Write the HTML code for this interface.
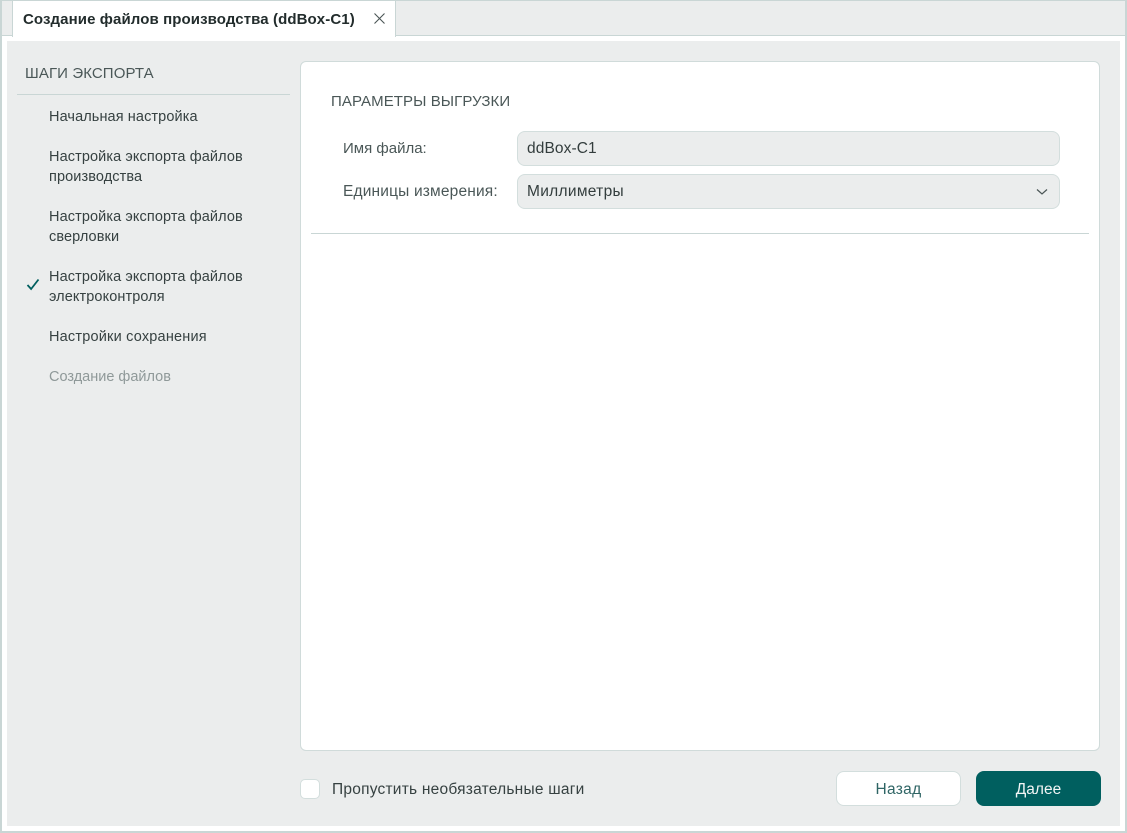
<!DOCTYPE html>
<html lang="ru"><head><meta charset="utf-8"><style>
html,body{margin:0;padding:0}
body{width:1127px;height:833px;position:relative;overflow:hidden;background:#fff;font-family:"Liberation Sans",sans-serif;color:#3a4646}
div,span{position:absolute;box-sizing:border-box}
.t{white-space:nowrap;font-size:14.5px;line-height:20px;color:#364141;letter-spacing:.1px}
.b{font-size:15px}
.c{font-size:15.5px}
</style></head><body>
<div style="left:0;top:0;width:1127px;height:833px;border:2px solid #c9d6d5;border-top-width:1px"></div>
<div style="left:2px;top:1px;width:1123px;height:35px;background:#ebeded;border-bottom:1px solid #c9d6d5"></div>
<div style="left:12px;top:1px;width:384px;height:36px;background:#fff;border-left:1px solid #c9d6d5;border-right:1px solid #c9d6d5"></div>
<span class="t" style="left:23px;top:10px;font-size:15px;font-weight:bold;color:#222c2c;letter-spacing:.1px">Создание файлов производства (ddBox-C1)</span>
<svg style="position:absolute;left:373px;top:12px" width="13" height="13" viewBox="0 0 13 13"><path d="M1.5 1.5l10 10M11.5 1.5l-10 10" stroke="#4a5555" stroke-width="1.1" fill="none"/></svg>
<div style="left:7px;top:41px;width:1113px;height:785px;background:#ebeded"></div>

<span class="t b" style="left:25px;top:64px;color:#4a5757;letter-spacing:.1px">ШАГИ ЭКСПОРТА</span>
<div style="left:17px;top:94px;width:273px;height:1px;background:#c9d6d5"></div>
<span class="t" style="left:49px;top:107px">Начальная настройка</span>
<span class="t" style="left:49px;top:147px">Настройка экспорта файлов</span>
<span class="t" style="left:49px;top:167px">производства</span>
<span class="t" style="left:49px;top:207px">Настройка экспорта файлов</span>
<span class="t" style="left:49px;top:227px">сверловки</span>
<svg style="position:absolute;left:26px;top:278px" width="14" height="13" viewBox="0 0 14 13"><path d="M1.5 7l3.6 4L12.5 1.5" stroke="#005f5f" stroke-width="1.8" fill="none"/></svg>
<span class="t" style="left:49px;top:267px">Настройка экспорта файлов</span>
<span class="t" style="left:49px;top:287px">электроконтроля</span>
<span class="t" style="left:49px;top:327px;letter-spacing:.2px">Настройки сохранения</span>
<span class="t" style="left:49px;top:367px;letter-spacing:0;color:#8f9999">Создание файлов</span>

<div style="left:300px;top:61px;width:800px;height:690px;background:#fff;border:1px solid #d0dbda;border-radius:6px"></div>
<span class="t b" style="left:331px;top:92px;color:#4a5757;letter-spacing:.08px">ПАРАМЕТРЫ ВЫГРУЗКИ</span>
<span class="t b" style="left:343px;top:139px;letter-spacing:0;color:#4a5757">Имя файла:</span>
<div style="left:517px;top:131px;width:543px;height:35px;background:#ebeded;border:1px solid #d3dedd;border-radius:8px"></div>
<span class="t c" style="left:527px;top:139px;letter-spacing:.1px;color:#333d3d">ddBox-C1</span>
<span class="t c" style="left:343px;top:182px;letter-spacing:.17px;color:#4a5757">Единицы измерения:</span>
<div style="left:517px;top:174px;width:543px;height:35px;background:#ebeded;border:1px solid #d3dedd;border-radius:8px"></div>
<span class="t c" style="left:527px;top:182px;letter-spacing:.3px;color:#333d3d">Миллиметры</span>
<svg style="position:absolute;left:1036px;top:188px" width="12" height="8" viewBox="0 0 12 8"><path d="M1 1.5l5 4.5 5-4.5" stroke="#4a5555" stroke-width="1.2" fill="none"/></svg>
<div style="left:311px;top:233px;width:778px;height:1px;background:#c9d6d5"></div>

<div style="left:300px;top:779px;width:20px;height:20px;background:#fff;border:1px solid #d3dedd;border-radius:5px"></div>
<span class="t c" style="left:332px;top:780px;letter-spacing:.23px">Пропустить необязательные шаги</span>
<div style="left:836px;top:771px;width:125px;height:35px;background:#fff;border:1px solid #d3dedd;border-radius:8px"></div>
<span class="t c" style="left:836px;top:780px;width:125px;text-align:center;letter-spacing:.3px;color:#2f6565">Назад</span>
<div style="left:976px;top:771px;width:125px;height:35px;background:#005f5f;border-radius:8px"></div>
<span class="t c" style="left:976px;top:780px;width:125px;text-align:center;letter-spacing:0;color:#f2f5f5">Далее</span>
</body></html>
